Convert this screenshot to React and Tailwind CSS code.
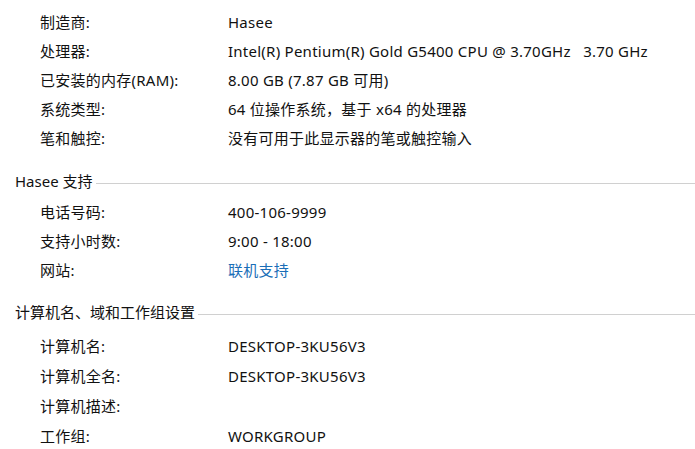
const font = { fontFamily: '"Segoe UI", "Noto Sans", "Noto Sans CJK SC", sans-serif' };

const basic = [
  ['制造商:', 'Hasee'],
  ['处理器:', 'Intel(R) Pentium(R) Gold G5400 CPU @ 3.70GHz   3.70 GHz'],
  ['已安装的内存(RAM):', '8.00 GB (7.87 GB 可用)'],
  ['系统类型:', '64 位操作系统，基于 x64 的处理器'],
  ['笔和触控:', '没有可用于此显示器的笔或触控输入'],
];

const support = [
  ['电话号码:', '400-106-9999'],
  ['支持小时数:', '9:00 - 18:00'],
  ['网站:', '联机支持', true],
];

const computer = [
  ['计算机名:', 'DESKTOP-3KU56V3'],
  ['计算机全名:', 'DESKTOP-3KU56V3'],
  ['计算机描述:', ''],
  ['工作组:', 'WORKGROUP'],
];

function Row({ label, value, link, tall }) {
  return (
    <div className={`flex items-center tracking-[0.25px] ${tall ? 'h-[30px]' : 'h-[29px]'}`}>
      <div className="w-[228px] pl-[40px] shrink-0">{label}</div>
      <div className={`whitespace-pre ${link ? 'text-[#1a6eb7]' : ''}`}>{value}</div>
    </div>
  );
}

function Header({ children, className }) {
  return (
    <div className={`flex items-center h-[29px] pl-[15px] ${className}`}>
      <span>{children}</span>
      <div className="flex-1 h-px bg-[#d0d0d0] ml-[3px] mt-[3px]" />
    </div>
  );
}

export default function App() {
  return (
    <div className="w-[695px] h-[449px] bg-white text-[15px] text-[#111] pt-[8px] overflow-hidden leading-none" style={font}>
      {basic.map(([l, v]) => (
        <Row key={l} label={l} value={v} />
      ))}
      <Header className="mt-[14px]">Hasee 支持</Header>
      <div className="mt-[2px]">
        {support.map(([l, v, link]) => (
          <Row key={l} label={l} value={v} link={link} />
        ))}
      </div>
      <Header className="mt-[13px]">计算机名、域和工作组设置</Header>
      <div className="mt-[4px]">
        {computer.map(([l, v]) => (
          <Row key={l} label={l} value={v} tall />
        ))}
      </div>
    </div>
  );
}
